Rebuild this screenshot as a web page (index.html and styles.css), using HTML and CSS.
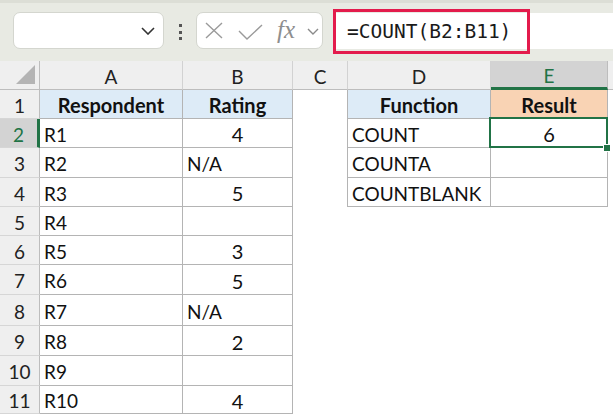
FILE: index.html
```html
<!DOCTYPE html>
<html lang="en">
  <head>
    <meta charset="UTF-8" />
    <title>COUNT example</title>
    <link rel="stylesheet" href="styles.css">
  </head>
  <body>
    <div class="toolbar">
      <div class="namebox">
        <svg width="14" height="8" viewBox="0 0 14 8"><path d="M1 1l6 6 6-6" fill="none" stroke="#333" stroke-width="1.6"/></svg>
      </div>
      <div class="grip"><i></i><i></i><i></i></div>
      <div class="fxbox">
        <svg class="ico-x" width="18" height="17" viewBox="0 0 18 17"><path d="M1 1l16 15M17 1L1 16" fill="none" stroke="#9a9a9a" stroke-width="1.4"/></svg>
        <svg class="ico-ok" width="25" height="17" viewBox="0 0 25 17"><path d="M1 7l8 8L24 1" fill="none" stroke="#9a9a9a" stroke-width="1.4"/></svg>
        <span class="fx">fx</span>
        <svg class="ico-dd" width="12" height="7" viewBox="0 0 12 7"><path d="M1 1l5 5 5-5" fill="none" stroke="#8a8a8a" stroke-width="1.4"/></svg>
      </div>
      <div class="formula">
        <div class="formula-text">=COUNT(B2:B11)</div>
      </div>
    </div>

    <div class="sheet">
      <div class="corner"><span class="tri"></span></div>
      <div class="colhead">A</div>
      <div class="colhead">B</div>
      <div class="colhead">C</div>
      <div class="colhead">D</div>
      <div class="colhead active">E</div>
      <div class="colhead blank"></div>

      <div class="rowhead">1</div>
      <div class="c t hdr blue">Respondent</div>
      <div class="c t hdr blue">Rating</div>
      <div class="c edge"></div>
      <div class="c t hdr blue">Function</div>
      <div class="c t hdr peach">Result</div>
      <div class="c"></div>

      <div class="rowhead active">2</div>
      <div class="c t">R1</div>
      <div class="c t num">4</div>
      <div class="c edge"></div>
      <div class="c t">COUNT</div>
      <div class="c t num selected">6</div>
      <div class="c"></div>

      <div class="rowhead">3</div>
      <div class="c t">R2</div>
      <div class="c t">N/A</div>
      <div class="c edge"></div>
      <div class="c t">COUNTA</div>
      <div class="c t"></div>
      <div class="c"></div>

      <div class="rowhead">4</div>
      <div class="c t">R3</div>
      <div class="c t num">5</div>
      <div class="c edge"></div>
      <div class="c t">COUNTBLANK</div>
      <div class="c t"></div>
      <div class="c"></div>

      <div class="rowhead">5</div>
      <div class="c t">R4</div>
      <div class="c t"></div>
      <div class="c"></div><div class="c"></div><div class="c"></div><div class="c"></div>

      <div class="rowhead">6</div>
      <div class="c t">R5</div>
      <div class="c t num">3</div>
      <div class="c"></div><div class="c"></div><div class="c"></div><div class="c"></div>

      <div class="rowhead">7</div>
      <div class="c t">R6</div>
      <div class="c t num">5</div>
      <div class="c"></div><div class="c"></div><div class="c"></div><div class="c"></div>

      <div class="rowhead">8</div>
      <div class="c t">R7</div>
      <div class="c t">N/A</div>
      <div class="c"></div><div class="c"></div><div class="c"></div><div class="c"></div>

      <div class="rowhead">9</div>
      <div class="c t">R8</div>
      <div class="c t num">2</div>
      <div class="c"></div><div class="c"></div><div class="c"></div><div class="c"></div>

      <div class="rowhead">10</div>
      <div class="c t">R9</div>
      <div class="c t"></div>
      <div class="c"></div><div class="c"></div><div class="c"></div><div class="c"></div>

      <div class="rowhead">11</div>
      <div class="c t">R10</div>
      <div class="c t num">4</div>
      <div class="c"></div><div class="c"></div><div class="c"></div><div class="c"></div>
    </div>
  </body>
</html>
```

FILE: styles.css
```css
body {
  margin: 0;
  width: 613px;
  height: 416px;
  overflow: hidden;
  background: #fff;
  font-family: Lato, "Liberation Sans", sans-serif;
  color: #111;
}

/* formula bar */
.toolbar {
  height: 61px;
  box-sizing: border-box;
  background: #e8eae3;
  border-top: 3px solid #dcded6;
  padding-top: 9px;
  display: flex;
  align-items: flex-start;
}
.namebox,
.fxbox {
  height: 37px;
  box-sizing: border-box;
  background: #fff;
  border: 1px solid #d4d6cf;
  border-radius: 7px;
  display: flex;
  align-items: center;
}
.namebox {
  margin-left: 13px;
  width: 151px;
  justify-content: flex-end;
  padding-right: 8px;
}
.grip {
  margin-left: 15px;
  padding-top: 12px;
  display: flex;
  flex-direction: column;
  gap: 3.5px;
}
.grip i {
  display: block;
  width: 3px;
  height: 3px;
  background: #555;
}
.fxbox {
  margin-left: 14px;
  width: 127px;
  padding-left: 8px;
}
.ico-ok {
  margin-left: 15px;
  margin-top: 3px;
}
.fx {
  margin-left: 14px;
  font-family: "Liberation Serif", serif;
  font-style: italic;
  font-size: 25px;
  color: #8e8e8e;
  line-height: 1;
  margin-top: -2px;
}
.ico-dd {
  margin-left: 12px;
  margin-top: 2px;
}
.formula {
  margin-left: 10px;
  flex: 1;
  height: 36px;
  margin-top: 1px;
  background: #fff;
  display: flex;
  align-items: center;
}
.formula-text {
  box-sizing: border-box;
  width: 197px;
  height: 45px;
  border: 3px solid #e31b4c;
  padding-left: 11px;
  display: flex;
  align-items: center;
  font-family: "DejaVu Sans Mono", monospace;
  font-size: 19.5px;
  color: #1a1a1a;
}

/* grid */
.sheet {
  display: grid;
  grid-template-columns: 40px 143px 110px 55px 143px 117px 1fr;
  grid-template-rows: 29px 29px 29px 30px 29px 29px 29px 30px 31px 30px 30px 28px;
  font-size: 19px;
}
.corner {
  background: #efefef;
  border-right: 1px solid #bdbdbd;
  border-bottom: 1px solid #bdbdbd;
  display: flex;
  justify-content: flex-end;
  align-items: flex-end;
  padding: 0 4px 5px 0;
}
.tri {
  width: 19px;
  height: 19px;
  background: #b4b4b4;
  clip-path: polygon(100% 0, 100% 100%, 0 100%);
}
.colhead {
  background: #efefef;
  border-right: 1px solid #d2d2d2;
  border-bottom: 1px solid #bdbdbd;
  display: flex;
  align-items: center;
  justify-content: center;
  padding-top: 2px;
  font-size: 19px;
  color: #222;
}
.colhead.active {
  background: #d3d3d3;
  color: #217346;
  border-bottom: 3px solid #217346;
  border-right-color: #bdbdbd;
}
.colhead.blank {
  border-right: none;
}
.rowhead {
  background: #efefef;
  border-right: 1px solid #bdbdbd;
  border-bottom: 1px solid #d6d6d6;
  display: flex;
  align-items: center;
  justify-content: center;
  padding-top: 2px;
  font-size: 19px;
  color: #222;
}
.rowhead.active {
  background: #d3d3d3;
  color: #217346;
  border-right: 3px solid #217346;
}
.c {
  display: flex;
  align-items: center;
  padding: 2px 4px 0;
  white-space: nowrap;
}
.t {
  border-right: 1px solid #b4b4b4;
  border-bottom: 1px solid #b4b4b4;
}
.edge {
  border-right: 1px solid #b4b4b4;
}
.num {
  justify-content: center;
  font-size: 20px;
}
.hdr {
  justify-content: center;
  font-weight: 700;
  font-size: 20px;
}
.blue {
  background: #ddebf7;
}
.peach {
  background: #f9d3b4;
}
.selected {
  position: relative;
}
.selected::after {
  content: "";
  position: absolute;
  top: -2px;
  left: -2px;
  right: -1px;
  bottom: -1px;
  border: 2px solid #217346;
}
.selected::before {
  content: "";
  position: absolute;
  right: -4px;
  bottom: -5px;
  width: 6px;
  height: 6px;
  background: #217346;
  border: 1px solid #fff;
  z-index: 2;
}
```
